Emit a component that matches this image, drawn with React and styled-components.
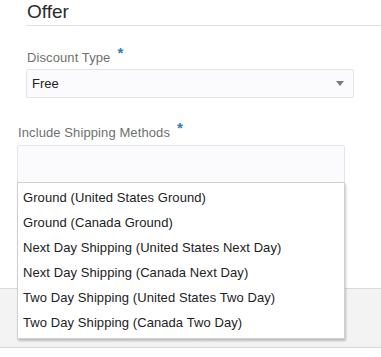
import React from 'react';
import styled, { createGlobalStyle } from 'styled-components';

const Global = createGlobalStyle`
  html, body {
    margin: 0;
    padding: 0;
    background: #fff;
  }
  body {
    font-family: "Liberation Sans", Arial, sans-serif;
    -webkit-font-smoothing: antialiased;
  }
`;

const Page = styled.div`
  width: 381px;
  height: 357px;
  overflow: hidden;
  display: flex;
  flex-direction: column;
`;

const OfferSection = styled.section`
  padding-left: 26px;
`;

const Title = styled.h2`
  margin: 0;
  font-size: 19px;
  font-weight: 400;
  line-height: 24px;
  height: 25px;
  color: #2b2b2b;
  padding-left: 1px;
  border-bottom: 1px solid #e2e2e2;
`;

const Field = styled.div`
  display: flex;
  flex-direction: column;
  margin-top: ${p => p.top}px;
`;

const Label = styled.label`
  font-size: 13px;
  line-height: 16px;
  height: 16px;
  color: #6f6f6f;
  padding-left: 1px;
  letter-spacing: 0.1px;
  margin-bottom: ${p => p.gap}px;
`;

const Required = styled.span`
  color: #2c7cc0;
  font-size: 15px;
  line-height: 0;
  font-weight: 700;
  margin-left: 7px;
  position: relative;
  top: -4px;
`;

const Select = styled.div`
  box-sizing: border-box;
  width: 328px;
  height: 29px;
  border: 1px solid #e4e4e8;
  border-radius: 2px;
  background: #fbfbfd;
  display: flex;
  align-items: center;
  justify-content: space-between;
  padding: 0 9px 0 5px;
  font-size: 13px;
  color: #222;
`;

const Caret = styled.span`
  width: 0;
  height: 0;
  border-left: 4px solid transparent;
  border-right: 4px solid transparent;
  border-top: 5px solid #7a7a7a;
`;

const ShippingSection = styled.section`
  padding-left: 17px;
  height: 190px;
`;

const Combo = styled.div`
  position: relative;
  width: 328px;
`;

const Input = styled.div`
  box-sizing: border-box;
  width: 328px;
  height: 38px;
  border: 1px solid #e4e4e8;
  border-radius: 2px;
  background: #fbfbfd;
`;

const Menu = styled.ul`
  position: absolute;
  top: 37px;
  left: 0;
  z-index: 2;
  box-sizing: border-box;
  width: 328px;
  margin: 0;
  padding: 2px 0 3px;
  list-style: none;
  background: #fff;
  border: 1px solid #d0d0d0;
  box-shadow: 1px 2px 2px rgba(0, 0, 0, 0.22);
`;

const Option = styled.li`
  height: 25px;
  line-height: 25px;
  padding-left: 5px;
  font-size: 13px;
  letter-spacing: 0.08px;
  color: #222;
  white-space: nowrap;
`;

const Footer = styled.div`
  box-sizing: border-box;
  height: 60px;
  background: #f3f3f3;
  border-top: 1px solid #d8d8d8;
  border-bottom: 1px solid #d8d8d8;
`;

const methods = [
  'Ground (United States Ground)',
  'Ground (Canada Ground)',
  'Next Day Shipping (United States Next Day)',
  'Next Day Shipping (Canada Next Day)',
  'Two Day Shipping (United States Two Day)',
  'Two Day Shipping (Canada Two Day)',
];

export default function App() {
  return (
    <Page>
      <Global />
      <OfferSection>
        <Title>Offer</Title>
        <Field top={24}>
          <Label gap={3}>
            Discount Type<Required>*</Required>
          </Label>
          <Select>
            <span>Free</span>
            <Caret />
          </Select>
        </Field>
      </OfferSection>
      <ShippingSection>
        <Field top={27}>
          <Label gap={4}>
            Include Shipping Methods<Required>*</Required>
          </Label>
          <Combo>
            <Input />
            <Menu>
              {methods.map((m, i) => (
                <Option key={i}>{m}</Option>
              ))}
            </Menu>
          </Combo>
        </Field>
      </ShippingSection>
      <Footer />
    </Page>
  );
}
